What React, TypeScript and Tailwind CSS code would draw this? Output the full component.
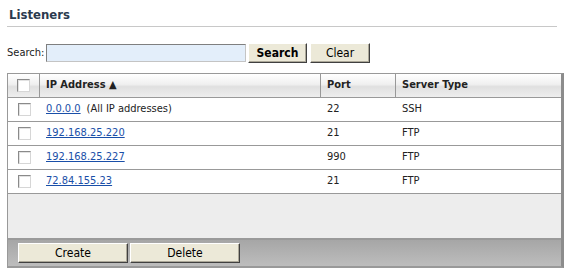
import React, { useState } from 'react';

type Listener = { ip: string; note?: string; port: number; type: string };

const LISTENERS: Listener[] = [
  { ip: '0.0.0.0', note: '(All IP addresses)', port: 22, type: 'SSH' },
  { ip: '192.168.25.220', port: 21, type: 'FTP' },
  { ip: '192.168.25.227', port: 990, type: 'FTP' },
  { ip: '72.84.155.23', port: 21, type: 'FTP' },
];

const font = { fontFamily: 'Tahoma, "DejaVu Sans Condensed", "DejaVu Sans", sans-serif' };

function Checkbox() {
  return (
    <span className="block w-[13px] h-[13px] border border-t-[#8a8a8a] border-l-[#8a8a8a] border-r-[#d6d6d6] border-b-[#d6d6d6] bg-white shadow-[inset_1px_1px_0_#e2e2e2]" />
  );
}

function XpButton({ label, bold, className }: { label: string; bold?: boolean; className?: string }) {
  return (
    <button
      className={`h-[20px] bg-[#ece9d8] border border-t-white border-l-white border-r-[#404040] border-b-[#404040] shadow-[inset_-1px_-1px_0_#aca899] text-[12px] text-black leading-none ${bold ? 'font-bold' : ''} ${className ?? ''}`}
    >
      {label}
    </button>
  );
}

export default function App() {
  const [query, setQuery] = useState('');

  return (
    <div className="w-[571px] h-[275px] bg-white px-[7px] pt-[7px] text-[11px] text-[#222]" style={font}>
      <div className="w-[550px] border-b border-[#c8c8c8] pb-[3px] pl-[2px]">
        <h1 className="text-[13px] font-bold text-[#2b3a4e] leading-[16px]">Listeners</h1>
      </div>

      <div className="flex items-center mt-[16px] h-[20px]">
        <span className="w-[39px] text-[11px] text-[#222]">Search:</span>
        <input
          value={query}
          onChange={e => setQuery(e.target.value)}
          className="w-[200px] h-[18px] bg-[#e3eefa] border border-t-[#7f7f7f] border-l-[#7f7f7f] border-r-[#c4c4c4] border-b-[#c4c4c4] outline-none px-[2px] text-[11px]"
        />
        <XpButton label="Search" bold className="w-[59px] ml-[2px]" />
        <XpButton label="Clear" className="w-[60px] ml-[3px]" />
      </div>

      <div className="mt-[10px] w-[557px] border-l border-t border-b-[2px] border-[#999] border-r-[3px] border-r-[#8c8c8c]">
        <div className="flex h-[24px] border-b border-[#999] bg-[linear-gradient(#ffffff_0%,#f0f0f0_45%,#e0e0e0_55%,#eeeeee_100%)] font-bold text-[#222] text-[11px]">
          <div className="w-[32px] flex items-center justify-center border-r border-[#999]">
            <Checkbox />
          </div>
          <div className="w-[281px] flex items-center pl-[6px] border-r border-[#999]">IP Address ▲</div>
          <div className="w-[75px] flex items-center pl-[6px] border-r border-[#999]">Port</div>
          <div className="flex-1 flex items-center pl-[6px]">Server Type</div>
        </div>

        {LISTENERS.map(row => (
          <div key={row.ip} className="flex h-[24px] border-b border-[#999] bg-white">
            <div className="w-[32px] flex items-center justify-center">
              <Checkbox />
            </div>
            <div className="w-[281px] flex items-center pl-[6px]">
              <a href="#" className="text-[#1a4fa8] underline">{row.ip}</a>
              {row.note ? <span className="ml-[6px]">{row.note}</span> : null}
            </div>
            <div className="w-[75px] flex items-center pl-[6px]">{row.port}</div>
            <div className="flex-1 flex items-center pl-[6px]">{row.type}</div>
          </div>
        ))}

        <div className="h-[46px] bg-[#ededed] border-b-[2px] border-[#9a9a9a]" />

        <div className="flex items-center h-[26px] pl-[10px] bg-[linear-gradient(#a6a6a6,#bdbdbd)]">
          <XpButton label="Create" className="w-[110px]" />
          <XpButton label="Delete" className="w-[110px] ml-[2px]" />
        </div>
      </div>
    </div>
  );
}
